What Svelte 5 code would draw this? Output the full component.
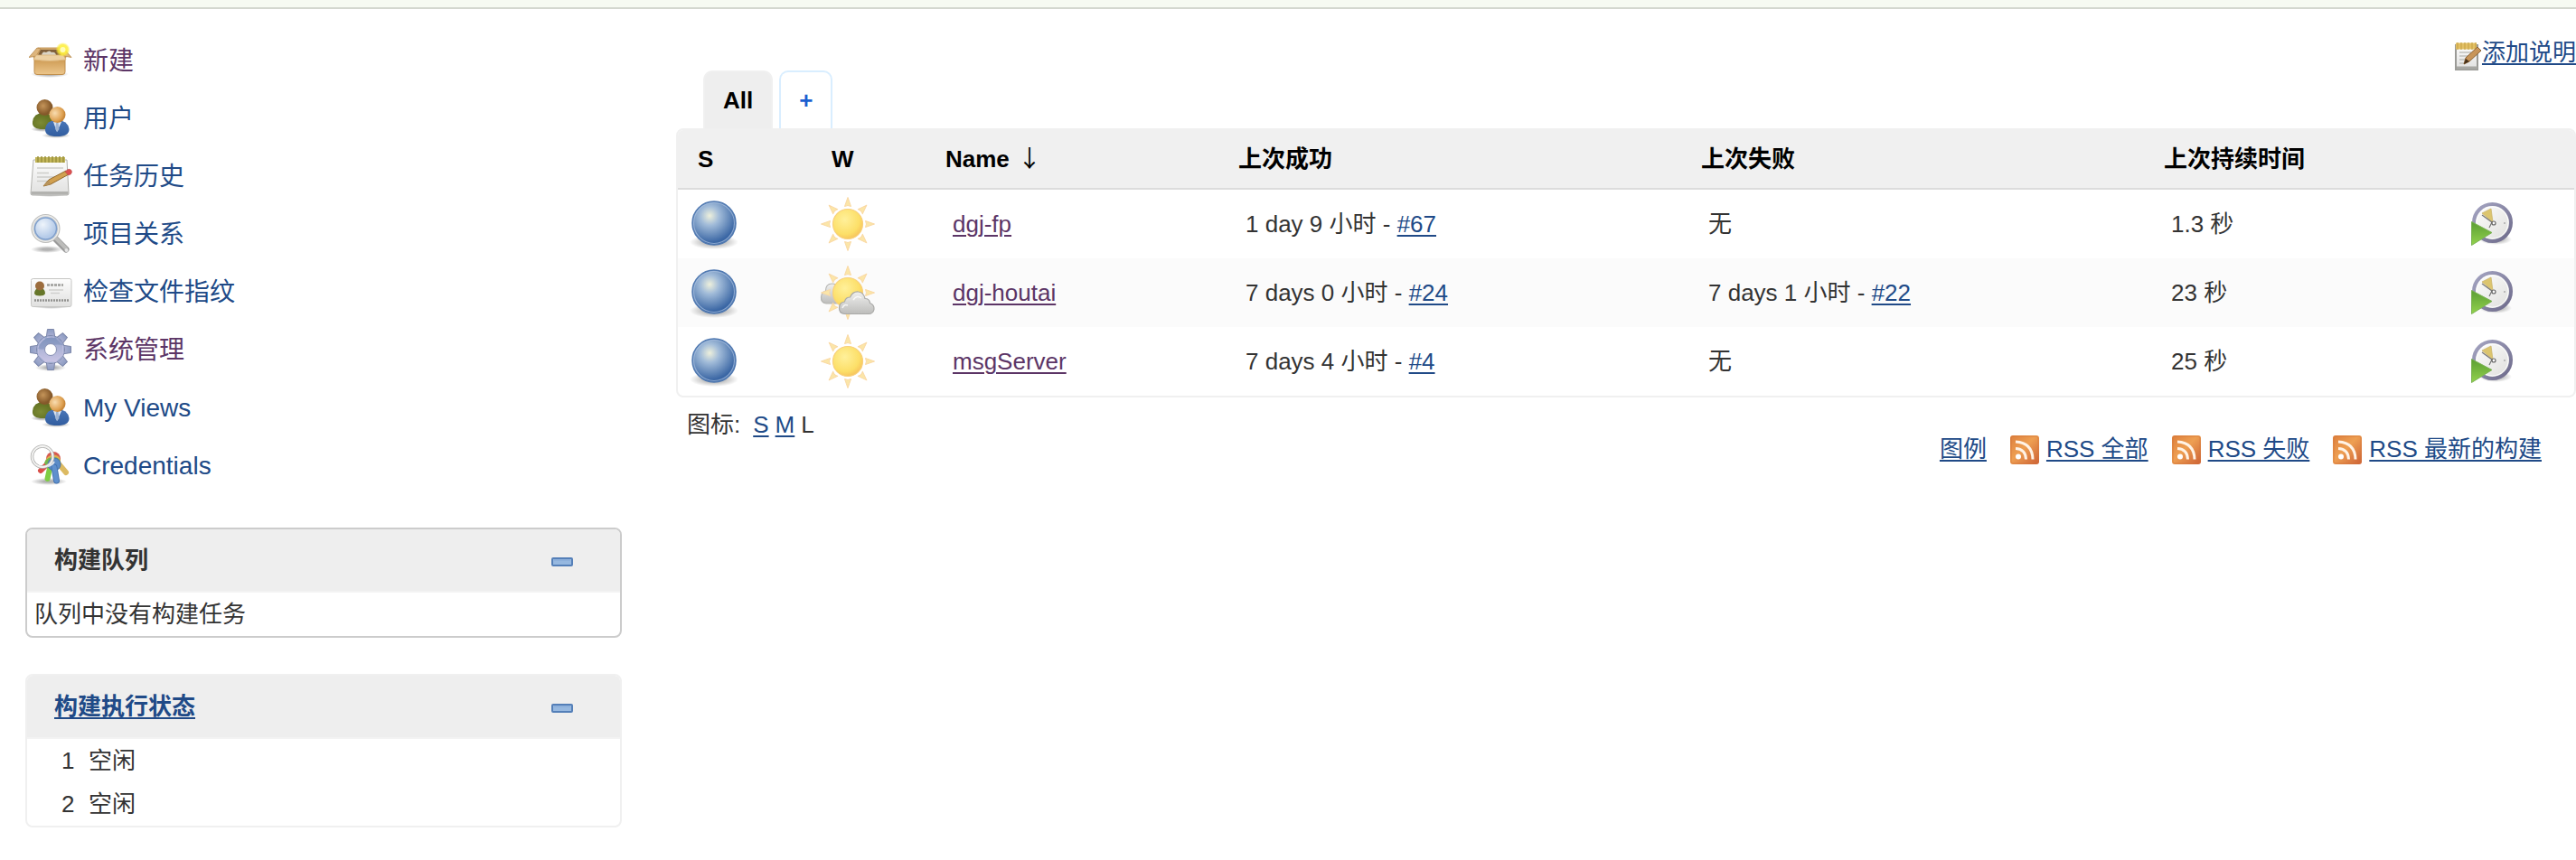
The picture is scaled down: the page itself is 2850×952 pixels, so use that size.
<script>
  const tasks = [
    { label: '新建', icon: 'box', visited: true },
    { label: '用户', icon: 'users' },
    { label: '任务历史', icon: 'notepad' },
    { label: '项目关系', icon: 'search' },
    { label: '检查文件指纹', icon: 'card' },
    { label: '系统管理', icon: 'gear', visited: true },
    { label: 'My Views', icon: 'users' },
    { label: 'Credentials', icon: 'keys' }
  ];
  const executors = [1, 2];
  const jobs = [
    { name: 'dgj-fp', weather: 'sunny', ok: '1 day 9 小时', okBuild: '#67', duration: '1.3 秒' },
    { name: 'dgj-houtai', weather: 'cloudy', ok: '7 days 0 小时', okBuild: '#24', bad: '7 days 1 小时', badBuild: '#22', duration: '23 秒' },
    { name: 'msgServer', weather: 'sunny', ok: '7 days 4 小时', okBuild: '#4', duration: '25 秒' }
  ];
  const feeds = ['RSS 全部', 'RSS 失败', 'RSS 最新的构建'];
  const angles = [0, 45, 90, 135, 180, 225, 270, 315];

  let queueOpen = $state(true);
  let executorsOpen = $state(true);
</script>

{#snippet taskIcon(name)}
  <svg class="task-icon" viewBox="0 0 48 48" aria-hidden="true">
    {#if name === 'box'}
      <ellipse cx="23" cy="38" rx="21" ry="4" fill="url(#g-shadow)" />
      <path d="M10 9H37L41 20H5Z" fill="#d3a86c" stroke="#c69a5c" stroke-width="1" />
      <path d="M13 11H34L36 17H10Z" fill="#80603a" />
      <path d="M14 17q1-5 5-3q4-3 6 0q4-1 5 3z" fill="#d9d3c4" />
      <path d="M9 9L13 10L8 18L0 19.500Z" fill="#ddb57c" stroke="#b98a4c" stroke-width=".8" />
      <path d="M38 9L35 10L39 18L47 19.500Z" fill="#ddb57c" stroke="#b98a4c" stroke-width=".8" />
      <path d="M6 20H40V35.500q0 3-3 3H9q-3 0-3-3z" fill="url(#g-box)" stroke="#c08e4c" stroke-width="1" />
      <path d="M8 17H38L41 22Q23 25 5 22Z" fill="#ecd0a2" stroke="#dcb47a" stroke-width=".8" />
      <circle cx="37.500" cy="11" r="8" fill="url(#g-glow)" />
      <circle cx="37.500" cy="11" r="3" fill="#fffcb8" />
    {:else if name === 'users'}
      <ellipse cx="30" cy="42" rx="16" ry="3" fill="url(#g-shadow)" />
      <ellipse cx="15" cy="35" rx="13" ry="3" fill="url(#g-shadow)" />
      <path d="M4 27q1-10 12-10t13 10q0 8-13 8t-12-8z" fill="url(#g-green)" />
      <circle cx="17.500" cy="11" r="9" fill="url(#g-brown)" />
      <path d="M18 35q1-10 13-10t13.500 10q0 8-13.500 8t-13-8z" fill="url(#g-blue)" />
      <path d="M27 27L31 38L36 27Z" fill="#dfe7f2" />
      <path d="M30 28h2.500l1 7-2.200 3-2.200-3z" fill="#9fb4d3" />
      <circle cx="31.500" cy="19" r="9" fill="url(#g-skin)" />
    {:else if name === 'notepad'}
      <ellipse cx="23" cy="43" rx="20" ry="3" fill="url(#g-shadow)" />
      <path d="M5 5H42L44 42q0 2-2 2H4q-2 0-2-2z" fill="url(#g-paper)" stroke="#b2b2ae" stroke-width="1" />
      <path d="M2.500 40H43.500V43.500H2.500Z" fill="#b2b2af" />
      <path d="M9 14H38M9 19.500H22M9 24H34M9 28.500H28" stroke="#cdcdca" stroke-width="1.500" />
      <path d="M7 5H40" stroke="#c3b65a" stroke-width="6" />
      <path d="M10 1V8M14 1V8M18 1V8M22 1V8M26 1V8M30 1V8M34 1V8M38 1V8" stroke="#9b913d" stroke-width="1.500" />
      <path d="M16 34L22 27L41 17L44 21L24 32Z" fill="#d1a050" stroke="#94692a" stroke-width="1" />
      <path d="M16 34L22 27L24 32Z" fill="#b8945c" />
      <path d="M40 18L43 15.500q4-1 4.500 3q-.5 3-4 3.500z" fill="#dc5050" stroke="#b04545" stroke-width=".5" />
    {:else if name === 'search'}
      <ellipse cx="20" cy="40" rx="18" ry="4" fill="url(#g-shadow)" />
      <path d="M29 28L41 40" stroke="#999" stroke-width="7" stroke-linecap="round" />
      <path d="M30 28L41 39" stroke="#bcbcba" stroke-width="4" stroke-linecap="round" />
      <circle cx="41.500" cy="41" r="2" fill="#e6e6e6" />
      <circle cx="18.500" cy="17" r="14.500" fill="url(#g-lens)" stroke="#bdbdbb" stroke-width="3" />
      <circle cx="18.500" cy="17" r="14.200" fill="none" stroke="#ededeb" stroke-width="1.500" />
      <circle cx="18.500" cy="17" r="12" fill="none" stroke="#7f9fcb" stroke-width="1.500" />
    {:else if name === 'card'}
      <ellipse cx="25" cy="39" rx="22" ry="3" fill="url(#g-shadow)" />
      <rect x="2.500" y="8.500" width="44.500" height="31" rx="2" fill="url(#g-paper)" stroke="#c6c6c4" stroke-width="1" />
      <path d="M6 25q0-6 6-6t6 6q-1 2.500-6 2.500t-6-2.500z" fill="#66762a" />
      <ellipse cx="12" cy="16.500" rx="5" ry="5" fill="#9c6d3e" />
      <path d="M20 15.500H38" stroke="#9d9d9a" stroke-width="2.500" stroke-dasharray="3 1" />
      <path d="M22 21H38M24 24.500H34" stroke="#d0d0cd" stroke-width="1.500" />
      <path d="M6 32.500H44" stroke="#91918f" stroke-width="2.500" stroke-dasharray="2 1" />
    {:else if name === 'gear'}
      <ellipse cx="24" cy="43" rx="17" ry="4" fill="url(#g-shadow)" />
      <g fill="url(#g-gear)" stroke="#7d87aa" stroke-width="1">
        {#each angles as a}
          <path d="M19 11L20.500 .500H27.500L29 11Z" transform="rotate({a} 24 23)" />
        {/each}
        <circle cx="24" cy="23" r="15.500" />
      </g>
      <circle cx="24" cy="23" r="15" fill="url(#g-gear-body)" />
      {#each angles as a}
        <path d="M19.500 10L20.500 8H27.500L28.500 10Z" fill="url(#g-gear-body)" transform="rotate({a} 24 23)" />
      {/each}
      <path d="M10 22q4-12 15-13q11 1 13 9q-12-2-15 3q-8 3-13 1z" fill="#5f79aa" opacity=".35" />
      <circle cx="24" cy="23" r="6.500" fill="#fff" stroke="#8790b3" stroke-width="1" />
    {:else}
      <ellipse cx="22" cy="41" rx="20" ry="4" fill="url(#g-shadow)" />
      <path d="M30 18L41 31" stroke="#dcba62" stroke-width="6" stroke-linecap="round" />
      <path d="M24 18L13 29" stroke="#d94f49" stroke-width="6" stroke-linecap="round" />
      <path d="M24 22L20.500 38" stroke="#7fce45" stroke-width="6" stroke-linecap="round" />
      <circle cx="27" cy="16" r="8" fill="#d65a50" />
      <path d="M18 18q3-7 10-6.500q7 1 7 7.500l-3 4H20z" fill="#dfb050" />
      <path d="M17 20q3-6 10-6t8 6q-1 5-4 6H20z" fill="#74b64b" />
      <circle cx="28" cy="22" r="7" fill="#5b8bc7" stroke="#4473b0" stroke-width="1" />
      <path d="M28 25L30.500 40" stroke="#4473b0" stroke-width="7" stroke-linecap="round" />
      <path d="M28 25L30.500 40" stroke="#5f90cd" stroke-width="5" stroke-linecap="round" />
      <circle cx="15" cy="13.500" r="11.500" fill="none" stroke="#b0b0ae" stroke-width="3.500" />
      <circle cx="15" cy="13.500" r="11.500" fill="none" stroke="#f4f4f3" stroke-width="1.800" />
      <path d="M21 24q5-1 7-5" fill="none" stroke="#dce3ec" stroke-width="2" />
    {/if}
  </svg>
{/snippet}

{#snippet statusIcon()}
  <svg class="big-icon" viewBox="0 0 64 64" role="img" aria-label="成功">
    <ellipse cx="32" cy="52" rx="27" ry="8" fill="url(#g-shadow)" />
    <circle cx="32" cy="31" r="24" fill="url(#g-ball)" stroke="#5079b1" stroke-width="1.500" />
    <circle cx="32" cy="31" r="22.500" fill="none" stroke="#a9c1e0" stroke-width="1.200" opacity=".7" />
  </svg>
{/snippet}

{#snippet weatherIcon(kind)}
  <svg class="big-icon" viewBox="0 0 64 64" role="img" aria-label={kind}>
    {#if kind === 'cloudy'}
      <path d="M8 44q-6-1-5.500-7t5-7q0-8 7-8q5 0 7 4V44Z" fill="url(#g-cloud)" stroke="#b5b5b2" stroke-width="1.200" />
    {/if}
    {#each angles as a}
      <path d="M28.500 12.500L32 2.500L35.500 12.500Q32 10.500 28.500 12.500Z" fill="#fbe6a8" stroke="#fad9a4" stroke-width="1" stroke-linejoin="round" transform="rotate({a} 32 32)" />
    {/each}
    <circle cx="32" cy="32" r="16.500" fill="url(#g-sun)" stroke="#f8d07c" stroke-width="1.200" />
    {#if kind === 'cloudy'}
      <path d="M28 55.500q-6-1-5.500-7t6-6.500q1-5 6-5q3-6.500 9-6t7.500 7.500q5 0 5.500 5q5 2 4.500 7q-1 5-6 5Z" fill="url(#g-cloud)" stroke="#a9a9a7" stroke-width="1.200" />
      <path d="M26 49q2-5 6-3M38 40q4-6 9-2" fill="none" stroke="#fff" stroke-width="1.500" opacity=".8" />
    {/if}
  </svg>
{/snippet}

{#snippet clockIcon()}
  <svg class="task-icon" viewBox="0 0 48 48" aria-hidden="true">
    <ellipse cx="27" cy="41" rx="18" ry="6" fill="url(#g-shadow)" />
    <circle cx="23.500" cy="22.500" r="20.500" fill="url(#g-face)" stroke="url(#g-rim)" stroke-width="4" />
    <circle cx="23.500" cy="22.500" r="17.500" fill="none" stroke="#fff" stroke-width="1" />
    <path d="M12 12L22 7L24 22Z" fill="#dcc56e" stroke="#cbb56c" stroke-width=".8" />
    <path d="M12 14L23 22L20 28" fill="none" stroke="#777" stroke-width="1.200" />
    <circle cx="25" cy="23" r="2" fill="#fff" stroke="#666" stroke-width="1.200" />
    <circle cx="37" cy="23" r="1" fill="#aaa" />
    <path d="M.500 21.500L23 33.500L.500 47.500Z" fill="url(#g-arrow)" stroke="#7cb355" stroke-width="1" />
  </svg>
{/snippet}

{#snippet minusIcon()}
  <svg class="minus" viewBox="0 0 24 10" aria-hidden="true">
    <rect x="1" y="1" width="22" height="8" rx="1" fill="#96b8e0" stroke="#547fb8" stroke-width="2" />
    <path d="M3 3H21" stroke="#84a8d6" stroke-width="1" />
  </svg>
{/snippet}

{#snippet rssIcon()}
  <svg class="small-icon" viewBox="0 0 32 32" aria-hidden="true">
    <rect width="32" height="32" rx="3" fill="url(#g-rss)" />
    <rect x="1" y="1" width="30" height="30" rx="2" fill="none" stroke="#d2753a" stroke-width="1" opacity=".6" />
    <circle cx="9" cy="23.500" r="3" fill="#fff" />
    <path d="M6 14.500Q17 15 17.500 26.500M6 7Q24.500 8 25 26.500" fill="none" stroke="#fff3e6" stroke-width="3" />
  </svg>
{/snippet}

<svg class="defs" width="0" height="0" aria-hidden="true">
  <defs>
    <radialGradient id="g-shadow"><stop offset=".3" stop-color="#000" stop-opacity=".3" /><stop offset="1" stop-color="#000" stop-opacity="0" /></radialGradient>
    <linearGradient id="g-box" x1="0" y1="0" x2="0" y2="1"><stop offset="0" stop-color="#cb974f" /><stop offset="1" stop-color="#ecc68b" /></linearGradient>
    <radialGradient id="g-glow"><stop offset=".3" stop-color="#fff34a" /><stop offset=".7" stop-color="#fdec35" stop-opacity=".8" /><stop offset="1" stop-color="#fdec35" stop-opacity="0" /></radialGradient>
    <radialGradient id="g-green" cx=".35" cy=".6" r=".7"><stop offset="0" stop-color="#7d8b34" /><stop offset="1" stop-color="#5a6a1e" /></radialGradient>
    <radialGradient id="g-brown" cx=".4" cy=".4"><stop offset="0" stop-color="#c5955a" /><stop offset="1" stop-color="#85592a" /></radialGradient>
    <linearGradient id="g-blue" x1="0" y1="0" x2="0" y2="1"><stop offset="0" stop-color="#4a77b8" /><stop offset="1" stop-color="#315d9f" /></linearGradient>
    <radialGradient id="g-skin" cx=".35" cy=".4" r=".6"><stop offset="0" stop-color="#f8dcb0" /><stop offset=".8" stop-color="#dea050" /><stop offset="1" stop-color="#c8873a" /></radialGradient>
    <linearGradient id="g-paper" x1="0" y1="0" x2="0" y2="1"><stop offset="0" stop-color="#fdfdfd" /><stop offset="1" stop-color="#e0e0df" /></linearGradient>
    <radialGradient id="g-lens" cx=".4" cy=".35"><stop offset="0" stop-color="#eef4fb" /><stop offset="1" stop-color="#b4cae8" /></radialGradient>
    <linearGradient id="g-gear" x1="0" y1="0" x2="0" y2="1"><stop offset="0" stop-color="#8c9cc2" /><stop offset="1" stop-color="#b4b6d8" /></linearGradient>
    <linearGradient id="g-gear-body" x1="0" y1="0" x2="0" y2="1"><stop offset="0" stop-color="#93a4c9" /><stop offset="1" stop-color="#ccc6e6" /></linearGradient>
    <radialGradient id="g-ball" cx=".4" cy=".33" r=".62"><stop offset="0" stop-color="#eef0dc" /><stop offset=".35" stop-color="#a2bcd9" /><stop offset="1" stop-color="#3a66a4" /></radialGradient>
    <radialGradient id="g-sun" cx=".4" cy=".35" r=".7"><stop offset="0" stop-color="#fff09a" /><stop offset=".7" stop-color="#fcdf68" /><stop offset="1" stop-color="#f6c05a" /></radialGradient>
    <linearGradient id="g-cloud" x1="0" y1="0" x2="0" y2="1"><stop offset="0" stop-color="#f0f0ef" /><stop offset="1" stop-color="#bdbdbb" /></linearGradient>
    <linearGradient id="g-face" x1="0" y1="0" x2="1" y2="1"><stop offset="0" stop-color="#fff" /><stop offset="1" stop-color="#dededb" /></linearGradient>
    <linearGradient id="g-rim" x1="0" y1="0" x2="1" y2="1"><stop offset="0" stop-color="#a5a5c2" /><stop offset="1" stop-color="#6d6a8a" /></linearGradient>
    <linearGradient id="g-arrow" x1="0" y1="0" x2="0" y2="1"><stop offset="0" stop-color="#5b9e34" /><stop offset="1" stop-color="#93d24d" /></linearGradient>
    <linearGradient id="g-rss" x1="0" y1="0" x2="1" y2="1"><stop offset="0" stop-color="#dd7f3c" /><stop offset=".45" stop-color="#ee9f52" /><stop offset="1" stop-color="#cc6035" /></linearGradient>
  </defs>
</svg>

<div class="breadcrumbs"></div>
<div class="page">
  <aside class="side">
    <nav class="tasks">
      {#each tasks as t}
        <a class="task" class:visited={t.visited} href="#task">{@render taskIcon(t.icon)}<span>{t.label}</span></a>
      {/each}
    </nav>

    <section class="pane queue">
      <header class="pane-head">
        <span>构建队列</span>
        <button class="toggle" type="button" aria-label="折叠构建队列" onclick={() => (queueOpen = !queueOpen)}>{@render minusIcon()}</button>
      </header>
      {#if queueOpen}<p class="empty">队列中没有构建任务</p>{/if}
    </section>

    <section class="pane">
      <header class="pane-head">
        <a href="#computer">构建执行状态</a>
        <button class="toggle" type="button" aria-label="折叠构建执行状态" onclick={() => (executorsOpen = !executorsOpen)}>{@render minusIcon()}</button>
      </header>
      {#if executorsOpen}
        <table class="executors">
          <tbody>
            {#each executors as n}
              <tr><td class="num">{n}</td><td>空闲</td></tr>
            {/each}
          </tbody>
        </table>
      {/if}
    </section>
  </aside>

  <main class="main">
    <div class="describe">
      <a href="#description">
        <svg class="small-icon" viewBox="0 0 32 32" aria-hidden="true">
          <path d="M3 4H27V31H3Z" fill="url(#g-paper)" stroke="#9b9b97" stroke-width="2" />
          <path d="M4 29H27" stroke="#a8a8a4" stroke-width="3" />
          <path d="M7 12H20M7 16H18M7 20H15M7 24H12" stroke="#c0c0bc" stroke-width="1.500" />
          <path d="M3 5H26" stroke="#e3c064" stroke-width="7" />
          <path d="M5 1V9M9 1V9M13 1V9M17 1V9M21 1V9M25 1V9" stroke="#c9a548" stroke-width="1.200" />
          <path d="M12 25L14 18L27 6L31 10L18 22Z" fill="#c8955a" stroke="#8d6434" stroke-width="1" />
          <path d="M12 25L14 19L18 22Z" fill="#46301a" />
        </svg><span>添加说明</span></a>
    </div>

    <div class="tabs">
      <a class="tab active" href="#all">All</a>
      <a class="tab add" href="#new-view" aria-label="新建视图">+</a>
    </div>

    <div class="frame">
      <table class="jobs">
        <colgroup>
          <col class="c-status" /><col class="c-weather" /><col class="c-name" /><col /><col /><col class="c-duration" /><col class="c-action" />
        </colgroup>
        <thead>
          <tr>
            <th class="narrow">S</th>
            <th class="narrow">W</th>
            <th>Name <span class="arrow">↓</span></th>
            <th>上次成功</th>
            <th>上次失败</th>
            <th>上次持续时间</th>
            <th></th>
          </tr>
        </thead>
        <tbody>
          {#each jobs as j}
            <tr>
              <td class="icon">{@render statusIcon()}</td>
              <td class="icon">{@render weatherIcon(j.weather)}</td>
              <td><a class="visited" href="#job">{j.name}</a></td>
              <td>{j.ok} - <a href="#build">{j.okBuild}</a></td>
              <td>{#if j.bad}{j.bad} - <a href="#build">{j.badBuild}</a>{:else}无{/if}</td>
              <td>{j.duration}</td>
              <td class="icon"><a href="#schedule" aria-label="立即构建">{@render clockIcon()}</a></td>
            </tr>
          {/each}
        </tbody>
      </table>
    </div>

    <div class="sizes">
      <span class="sizes-label">图标:</span>
      <a href="#s">S</a>
      <a href="#m">M</a>
      <span>L</span>
    </div>

    <div class="feeds">
      <a class="legend" href="#legend">图例</a>
      {#each feeds as f}
        <a class="feed" href="#rss">{@render rssIcon()}<span>{f}</span></a>
      {/each}
    </div>
  </main>
</div>

<style>
  :global(body) {
    background: #fff;
    color: #333;
    font: 26px/32px 'Liberation Sans', 'Noto Sans CJK SC', sans-serif;
  }
  a {
    color: #204a87;
    text-underline-offset: 3px;
    text-decoration-thickness: 2px;
  }
  a.visited {
    color: #5c3566;
  }
  .defs {
    position: absolute;
  }
  .breadcrumbs {
    height: 8px;
    background: #f6faf2;
    border-bottom: 2px solid #d3d7cf;
  }
  .page {
    display: flex;
    gap: 60px;
    padding-left: 28px;
  }
  .side {
    flex: 0 0 660px;
    padding-top: 34px;
  }
  .tasks {
    display: flex;
    flex-direction: column;
    gap: 16px;
    padding-left: 4px;
    margin-bottom: 44px;
  }
  .task {
    display: flex;
    align-items: center;
    gap: 12px;
    font-size: 28px;
    text-decoration: none;
  }
  .task-icon {
    display: block;
    width: 48px;
    height: 48px;
  }
  .pane {
    margin-bottom: 40px;
    border: 2px solid #f0f0f0;
    border-radius: 8px;
    overflow: hidden;
  }
  .pane.queue {
    border-color: #ccc;
  }
  .pane-head {
    display: flex;
    justify-content: space-between;
    align-items: center;
    height: 68px;
    padding: 0 50px 0 30px;
    background: #eee;
    border-bottom: 2px solid #f3f3f3;
    font-weight: bold;
  }
  .toggle {
    display: flex;
    padding: 4px 2px 0;
    border: 0;
    background: none;
  }
  .minus {
    width: 24px;
    height: 10px;
  }
  .empty {
    margin: 0;
    padding: 8px;
  }
  .executors {
    border-collapse: collapse;
    width: 100%;
  }
  .executors td {
    padding: 8px 0;
  }
  .executors .num {
    width: 30px;
    padding-left: 38px;
  }
  .main {
    flex: 1;
    min-width: 0;
    padding-top: 34px;
  }
  .describe {
    display: flex;
    justify-content: flex-end;
    height: 34px;
  }
  .describe a {
    display: flex;
    align-items: flex-end;
  }
  .describe span {
    padding-bottom: 4px;
  }
  .small-icon {
    display: block;
    width: 32px;
    height: 32px;
  }
  .tabs {
    display: flex;
    gap: 7px;
    padding-left: 30px;
  }
  .tab {
    padding: 16px 20px;
    border: 2px solid #f0f0f0;
    border-bottom: 0;
    border-radius: 10px 10px 0 0;
    line-height: 30px;
    font-weight: bold;
    text-decoration: none;
  }
  .tab.active {
    background: #eee;
    color: #000;
  }
  .tab.add {
    border-color: #d9eeff;
    color: #1c5fd0;
  }
  .frame {
    border: 2px solid #f0f0f0;
    border-radius: 8px;
    overflow: hidden;
  }
  .jobs {
    width: 100%;
    table-layout: fixed;
    border-collapse: collapse;
  }
  .c-status { width: 148px; }
  .c-weather { width: 140px; }
  .c-name { width: 324px; }
  .c-duration { width: 340px; }
  .c-action { width: 122px; }
  .jobs th {
    height: 64px;
    padding: 0 8px;
    background: #f0f0f0;
    border-bottom: 2px solid #dcdcdc;
    color: #000;
    text-align: left;
  }
  .jobs th.narrow {
    padding-left: 22px;
  }
  .arrow {
    padding-left: 2px;
    font-family: 'Noto Sans CJK SC', sans-serif;
    font-weight: normal;
    line-height: 1;
  }
  .jobs td {
    height: 76px;
    padding: 0 16px;
  }
  .jobs td.icon {
    padding: 0 8px;
  }
  .jobs tbody tr:nth-child(even) {
    background: #fbfbfb;
  }
  .big-icon {
    display: block;
    width: 64px;
    height: 64px;
  }
  .sizes {
    display: flex;
    gap: 7px;
    padding: 14px 12px 0;
  }
  .sizes-label {
    padding-right: 7px;
  }
  .feeds {
    display: flex;
    justify-content: flex-end;
    align-items: flex-start;
    gap: 26px;
    padding: 0 38px 24px 0;
    margin-top: -4px;
  }
  .legend {
    line-height: 30px;
  }
  .feed {
    display: flex;
    gap: 8px;
  }
  .feed span {
    line-height: 30px;
  }
</style>
